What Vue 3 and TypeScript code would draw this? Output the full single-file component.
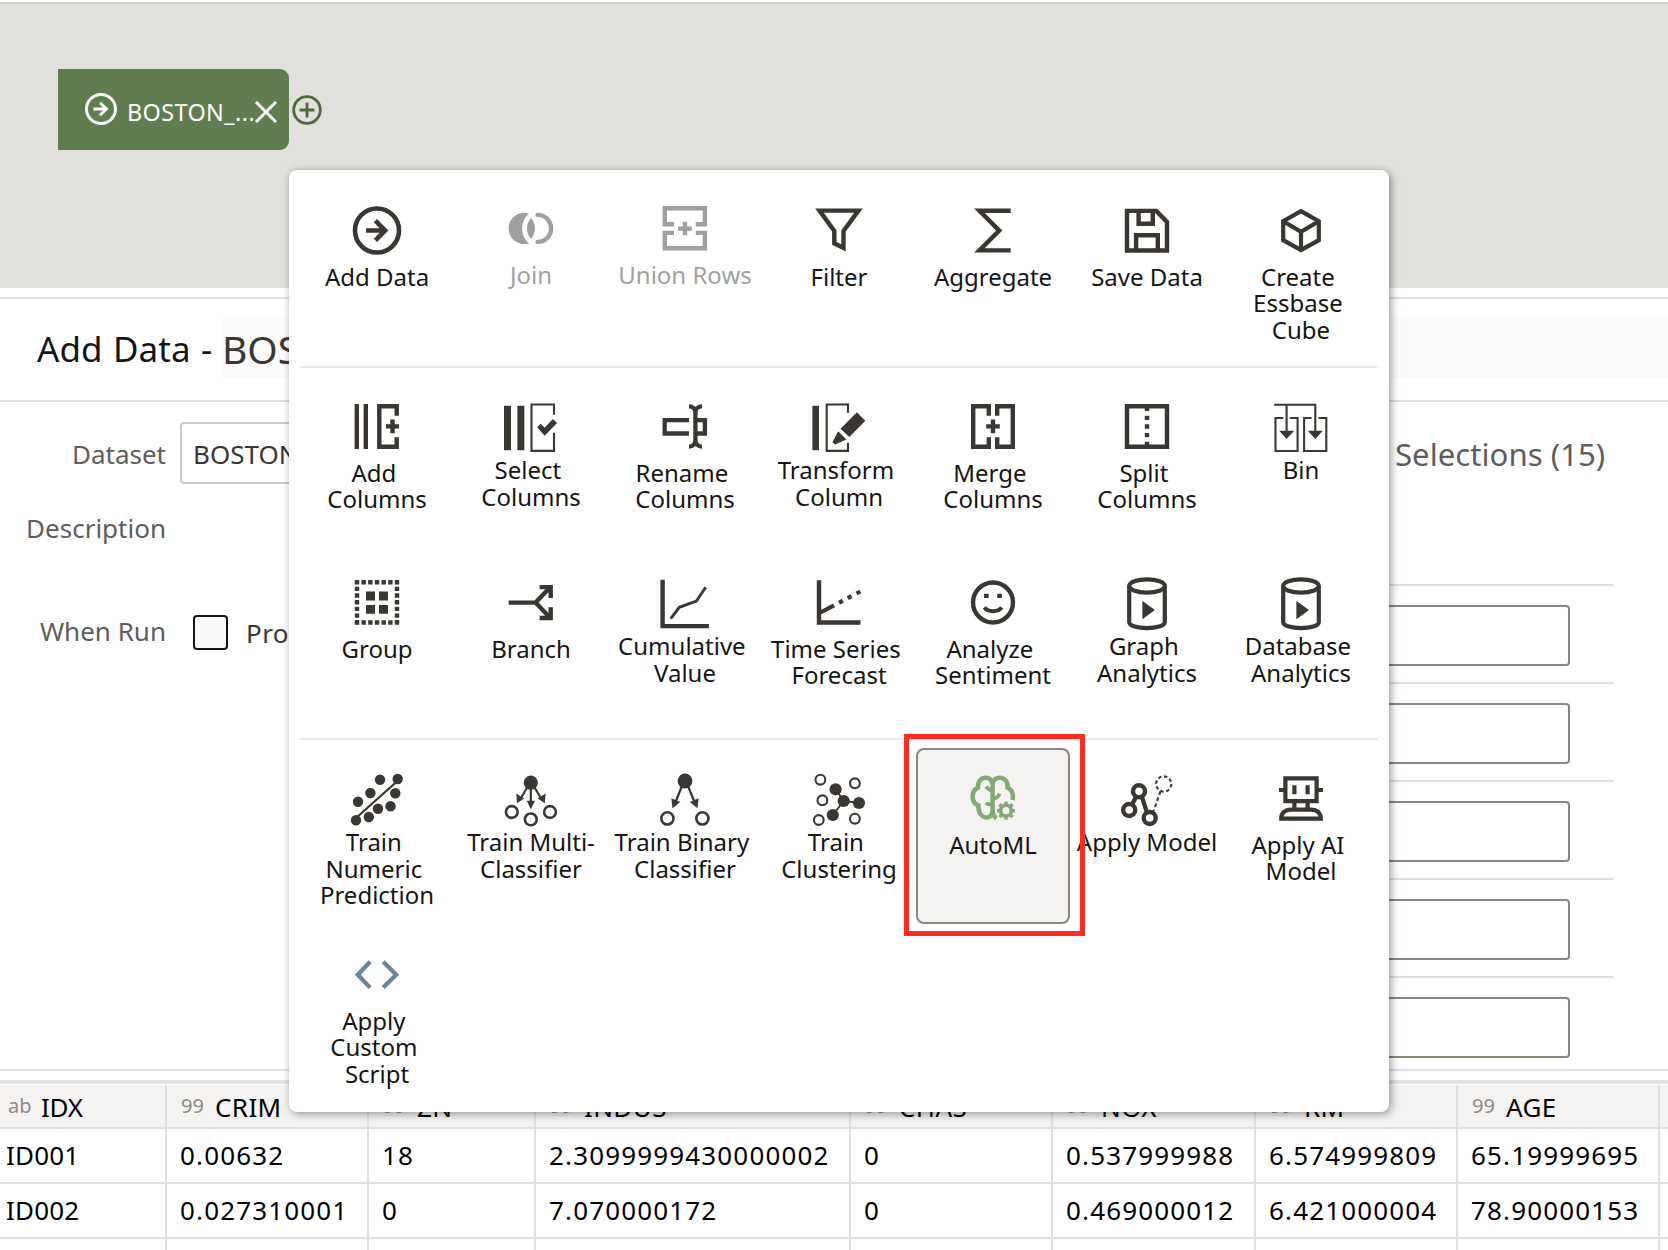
<script setup lang="ts">
interface Step {
  lines: string[]
  icon: string
  tall?: boolean
  disabled?: boolean
  selected?: boolean
  tone?: 'green' | 'blue'
}

// Every step icon is drawn around its own centre (0,0) in a 64px box.
const solid = (inner: string) => `<g fill="currentColor" stroke="none">${inner}</g>`
const dots = (r: number, pts: number[][]) =>
  pts.map(([x, y]) => `<circle cx="${x}" cy="${y}" r="${r}"/>`).join('')
const path = (d: string, width = 4.4) => `<path d="${d}" stroke-width="${width}"/>`

const cylinder =
  '<ellipse cx="0" cy="-16" rx="17.8" ry="6.6" stroke-width="4.2"/>' +
  path('M-17.8-16V20C-17.8 28.2 17.8 28.2 17.8 20V-16', 4.2) +
  solid('<path d="M-4.6-1L8 8-4.6 17.3Z"/>')

const gearTeeth = [0, 45, 90, 135, 180, 225, 270, 315]
  .map((a) => `<path d="M13 6.4V3.6" stroke-width="3.4" transform="rotate(${a} 13 12.7)"/>`)
  .join('')

const groups: Step[][] = [
  [
    {
      lines: ['Add Data'],
      icon: '<circle cx="0" cy=".5" r="22" stroke-width="4.6"/>' + path('M-11 .5H8M-1.6-9.3L8.2.5-1.6 10.3', 4.6),
    },
    {
      lines: ['Join'],
      disabled: true,
      icon:
        solid(
          '<path d="M-2.1-14.6A15.7 15.7 0 1 0-2.1 15.4A19.9 19.9 0 0 1-2.1-14.6Z"/>' +
            '<path d="M0-9.9A15.3 15.3 0 0 1 0 10.7A15.3 15.3 0 0 1 0-9.9Z"/>',
        ) + '<path d="M6.6-13.1A13.5 13.5 0 0 1 6.6 13.9" stroke-width="4.4" stroke-linecap="round"/>',
    },
    {
      lines: ['Union Rows'],
      disabled: true,
      icon: path('M-11-3.8H-20.2V-19.7H19.9V-3.8H10.7M-11 4.9H-20.2V20.3H19.9V4.9H10.7M-6.8.6H6.8M0-6.2V7.2'),
    },
    { lines: ['Filter'], icon: path('M-19.5-19.4H19.5L4.5 1V18L-4.7 13.3V1Z') },
    { lines: ['Aggregate'], icon: path('M17.7-19.2H-13.6L6.3.6-13.6 20.4H17.7') },
    {
      lines: ['Save Data'],
      icon: path('M-20-19.1H9.3L20-8V20.5H-20ZM-8.4-19V-6.2H5.8V-19M-10.9 20V5.2H10.8V20'),
    },
    {
      lines: ['Create ', 'Essbase ', 'Cube'],
      icon: path('M0-18.8L17.8-8.8V10.2L0 20.2-17.8 10.2V-8.8ZM-17.8-8.8L0 1.8 17.8-8.8M0 2V20', 4.2),
    },
  ],
  [
    {
      lines: ['Add ', 'Columns'],
      icon: path('M-20.2-22V23M-11.2-22V23M19.7-10.3V-19.8H2.3V20.8H19.7V11.3M9 .4H22M15.5-6.4V7.2'),
    },
    {
      lines: ['Select ', 'Columns'],
      tall: true,
      icon:
        solid('<path d="M-27-20.3H-20V24.3H-27ZM-13.6-20.3H-6.7V24.3H-13.6ZM6.1 1.3L9.7-2.2 13.6 1.7 21.9-7 26.1-3 13.6 9.7Z"/>') +
        path('M23-11.3V-21.5H.5V24.9H23V6.7', 2.1),
    },
    {
      lines: ['Rename ', 'Columns'],
      icon: path(
        'M4-5.8H-20.3V7.5H4M12-5.8H19.9V7.5H12M4-19.6C8-19.6 10.4-17 10.4-13V14C10.4 18 8 20.6 4 20.6M17-19.6C13-19.6 10.4-17 10.4-13M10.4 14C10.4 18 13 20.6 17 20.6',
        4.3,
      ),
    },
    {
      lines: ['Transform ', 'Column'],
      tall: true,
      icon:
        solid(
          '<path d="M-26.6-20.3H-20V24.3H-26.6ZM17.9-13.7L26.3-5.3 10.3 11 1.5 2.7ZM-.8 5.2L7.4 13.4 2.3 15.8-3.9 18.6-6.6 16.2Z"/>',
        ) + path('M9-13.3V-21.5H-12.3V24.9H9V16.7', 2.1),
    },
    {
      lines: ['Merge ', 'Columns'],
      icon: path('M-4.2-10.3V-19.8H-19.8V20.8H-4.2V11.3M4.2-10.3V-19.8H19.8V20.8H4.2V11.3M-6.8.4H6.8M0-6.4V7.2'),
    },
    {
      lines: ['Split ', 'Columns'],
      icon: path('M-20-19.8H20V20.8H-20ZM0-19V-15M0-10.3V-6M0-1.7V2.7M0 7V11.3M0 15.7V20'),
    },
    {
      lines: ['Bin'],
      tall: true,
      icon:
        path('M-26.8-21.2H14.3V5M-14.4-21V5M-17.7-8H-25.5V25H-3.4V-8H-11.2M10.6-8H3.1V25H25.3V-8H17.5', 2.1) +
        solid('<path d="M-21.8 4.7H-6.8L-14.4 13ZM6.8 4.7H21.8L14.3 13Z"/>'),
    },
    {
      lines: ['Group'],
      icon:
        '<path d="M-22.2-19.8H22.2M-22.2 20.5H22.2M-20-22V22.7M20-22V22.7" stroke-width="4.4" stroke-dasharray="4.4 2.28"/>' +
        solid('<path d="M-11-10.4H-2V-1.6H-11ZM2-10.4H11V-1.6H2ZM-11 2.9H-2V11.7H-11ZM2 2.9H11V11.7H2Z"/>'),
    },
    {
      lines: ['Branch'],
      icon: path('M-22.4.6H4.6L19-14.6M8.6-14.9H19.7V-4M4.6.6L19 15.8M8.6 16H19.7V5.2'),
    },
    {
      lines: ['Cumulative ', 'Value'],
      tall: true,
      icon: path('M-22.4-22.3V24.1H23.9') + path('M-14.3 16.7L-5.7 5.3 11.4-1 20.7-14.7', 2.9),
    },
    {
      lines: ['Time Series ', 'Forecast'],
      icon: path('M-20-21.7V20.5H21.5') + path('M-18.5 10.5L-5 3.3M0 .8L3.8-1.3M8.7-3.9L12.5-5.9M17.5-8.5L21.3-10.5', 4.2),
    },
    {
      lines: ['Analyze ', 'Sentiment'],
      icon:
        '<circle cx="0" cy=".5" r="20" stroke-width="4.4"/>' +
        path('M-8.7 5.4C-5 10.5 5 10.5 8.7 5.4', 4) +
        solid('<path d="M-8.9-8.3H-4.3V-3.9H-8.9ZM4.3-8.3H8.9V-3.9H4.3Z"/>'),
    },
    { lines: ['Graph ', 'Analytics'], tall: true, icon: cylinder },
    { lines: ['Database ', 'Analytics'], tall: true, icon: cylinder },
  ],
  [
    {
      lines: ['Train ', 'Numeric ', 'Prediction'],
      tall: true,
      icon:
        solid(
          dots(5.2, [[-21, 22.3], [-8.2, 19], [1, 10.7], [13.5, 8.3], [18.3, -4.7], [20.7, -19], [3, -18.3], [-6.6, -5], [-19, 3.7]]),
        ) + path('M-21 20L20.5-17', 2.2),
    },
    {
      lines: ['Train Multi-', 'Classifier'],
      tall: true,
      icon:
        solid(
          dots(7.1, [[-0.2, -15.3]]) +
            '<path d="M-4.2 2.7H4L-.2 11.3ZM-14.8-4.6L-6.9.6-14 5.2ZM14.6-4.6L6.7.6 13.8 5.2Z"/>',
        ) +
        path('M-.2-12V5M-3.5-11L-10 0M3.3-11L9.8 0', 2.2) +
        `<g stroke-width="2.6">${dots(5.9, [[-19.2, 14], [-0.2, 21.4], [19, 14]])}</g>`,
    },
    {
      lines: ['Train Binary ', 'Classifier'],
      tall: true,
      icon:
        solid(dots(7.4, [[0, -17]]) + '<path d="M-13.7.2L-4.8 4-12.5 10.2ZM13.7.2L4.8 4 12.5 10.2Z"/>') +
        path('M-3-12L-9.5 4M3-12L9.5 4', 2.2) +
        `<g stroke-width="2.6">${dots(6.1, [[-17.6, 20.4], [17.4, 20.4]])}</g>`,
    },
    {
      lines: ['Train ', 'Clustering'],
      tall: true,
      icon:
        solid(dots(6.1, [[-3.4, -8.7], [4.7, 3], [20, 5], [-6.2, 17]])) +
        path('M-3.4-8.7L4.7 3 20 5M4.7 3L-6.2 17', 2) +
        `<g stroke-width="2.1">${dots(4.9, [[-18.6, -18.3], [15.9, -14.7], [-16.6, 2.3], [-20.2, 22], [15.9, 20.7]])}</g>`,
    },
    {
      lines: ['AutoML'],
      selected: true,
      tone: 'green',
      icon:
        path('M-.8-14C-1-22.8-15.6-23-15-10.4C-22.6-7-21.8 5-14.6 7.4C-15.4 22-.4 23-.4 12', 4.5) +
        path('M-.4-15V12C-.4 16 .8 18.6 3.4 20.4M-.4-14C-.2-22.8 15.4-23 14.6-10.4C19.4-8 20.8-3 19.6 2', 4.5) +
        path('M-6.8-11.5C-5-8.5-3-8-.8-7.6M0 .4C3 .4 5.4-1 6.6-4.4M-7 4.8C-5.4 6.4-3 6.6-.8 6', 3.8) +
        '<circle cx="13" cy="12.7" r="5.4" stroke-width="3.6"/>' +
        gearTeeth,
    },
    {
      lines: ['Apply Model'],
      tall: true,
      icon:
        `<g stroke-width="4.4">${dots(6, [[-8, -6.7], [-17.8, 12], [2.7, 20]])}</g>` +
        path('M-10.8-1.4L-15 6.7M-5.2-1.4L0 14.6', 4.4) +
        '<circle cx="16.7" cy="-14" r="7.6" stroke-width="2.1" stroke-dasharray="3.4 2.57"/>' +
        '<path d="M13.4-6.6L6.6 13" stroke-width="2.1" stroke-dasharray="3.6 2.8"/>',
    },
    {
      lines: ['Apply AI ', 'Model'],
      icon:
        path('M-15.6-19.6H15.6V3.2H-15.6ZM-22-8H-16M16-8H22M-6.6 4V10M6.6 4V10M-6.6-12.7V-3.8M6.6-12.7V-3.8', 4.2) +
        path('M-19.8 20.7C-19.8 14-15 11.6-10 11.6H10C15 11.6 19.8 14 19.8 20.7Z', 4.2),
    },
    {
      lines: ['Apply ', 'Custom ', 'Script'],
      tone: 'blue',
      icon: path('M-6.9-12.2L-19.2.7-6.9 13.6M6.2-12.2L19.2.7 6.2 13.6', 4.2),
    },
  ],
]

const columns = [
  { name: 'IDX', type: 'ab', width: 167, cells: ['ID001', 'ID002'] },
  { name: 'CRIM', type: '99', width: 202, cells: ['0.00632', '0.027310001'] },
  { name: 'ZN', type: '99', width: 167, cells: ['18', '0'] },
  { name: 'INDUS', type: '99', width: 315, cells: ['2.3099999430000002', '7.070000172'] },
  { name: 'CHAS', type: '99', width: 202, cells: ['0', '0'] },
  { name: 'NOX', type: '99', width: 203, cells: ['0.537999988', '0.469000012'] },
  { name: 'RM', type: '99', width: 202, cells: ['6.574999809', '6.421000004'] },
  { name: 'AGE', type: '99', width: 202, cells: ['65.19999695', '78.90000153'] },
]
</script>

<template>
  <main class="page">
    <section class="canvas">
      <div class="flow">
        <div class="node">
          <svg class="node-icon" viewBox="-16 -16 32 32">
            <circle r="14.5" />
            <path d="M-7.5 0H5.4M-1-6.3L5.4 0-1 6.3" />
          </svg>
          <span class="node-name">BOSTON_...</span>
          <svg class="node-close" viewBox="0 0 22 22"><path d="M1 1L21 21M21 1L1 21" /></svg>
        </div>
        <svg class="node-add" viewBox="-15 -15 30 30">
          <circle r="13.3" />
          <path d="M-7.4 0H7.4M0-7.4V7.4" />
        </svg>
      </div>
    </section>

    <section class="editor">
      <header class="title">
        <span class="title-kind">Add Data -</span>
        <span class="title-name">BOSTON_...</span>
      </header>
      <div class="body">
        <div class="form">
          <div class="row dataset">
            <label>Dataset</label>
            <div class="input">BOSTON_...</div>
          </div>
          <div class="row description"><label>Description</label></div>
          <div class="row run">
            <label>When Run</label>
            <span class="check"></span>
            <span class="prompt">Prompt</span>
          </div>
        </div>
        <div class="selections">
          <h2>Selections (15)</h2>
          <div v-for="n in 5" :key="n" class="field"><div class="box"></div></div>
        </div>
      </div>
    </section>

    <div class="splitter"></div>

    <section class="grid">
      <div v-for="c in columns" :key="c.name" class="col" :style="{ width: c.width + 'px' }">
        <div class="head" :class="{ first: c.type === 'ab' }">
          <span class="type">{{ c.type }}</span>
          <span class="name">{{ c.name }}</span>
        </div>
        <div v-for="(v, i) in c.cells" :key="i" class="cell" :class="{ first: c.type === 'ab' }">{{ v }}</div>
      </div>
      <div class="col rest">
        <div class="head"></div>
        <div class="cell"></div>
        <div class="cell"></div>
      </div>
    </section>

    <div class="menu">
      <div v-for="(g, gi) in groups" :key="gi" class="group">
        <button
          v-for="s in g"
          :key="s.lines.join('')"
          class="step"
          :class="[{ tall: s.tall, disabled: s.disabled, selected: s.selected }, s.tone]"
        >
          <svg viewBox="-32 -32 64 64" v-html="s.icon"></svg>
          <span class="label"><span v-for="l in s.lines" :key="l" class="line">{{ l }}</span></span>
        </button>
      </div>
    </div>
    <div class="highlight"></div>
  </main>
</template>

<style>
body {
  margin: 0;
  background: #fff;
}
</style>

<style scoped>
.page {
  position: relative;
  box-sizing: border-box;
  width: 1668px;
  height: 1250px;
  padding-top: 2px;
  overflow: hidden;
  background: #fff;
  color: #161513;
  font-family: 'Noto Sans', 'Open Sans', sans-serif;
  white-space: nowrap;
}
svg {
  display: block;
  flex: none;
  fill: none;
  stroke: currentColor;
  overflow: visible;
}
.canvas {
  box-sizing: border-box;
  height: 286px;
  padding: 65px 0 0 58px;
  border-top: 2px solid #cecdca;
  border-bottom: 2px solid #dfe3e6;
  background: #e2e1de;
}
.flow {
  display: flex;
  align-items: flex-start;
}
.node {
  display: flex;
  box-sizing: border-box;
  width: 231px;
  height: 81px;
  padding-left: 27px;
  border-radius: 0 9px 9px 0;
  background: #5f7d4f;
  color: #fff;
}
.node-icon {
  width: 32px;
  height: 32px;
  margin-top: 24px;
  stroke-width: 3;
}
.node-name {
  width: 126px;
  margin: 27px 0 0 10px;
  font-size: 23.4px;
  line-height: 32px;
  letter-spacing: 0.4px;
}
.node-close {
  width: 22px;
  height: 22px;
  margin-top: 32px;
  margin-left: 2px;
  stroke-width: 3;
}
.node-add {
  width: 30px;
  height: 30px;
  margin: 25.5px 0 0 2.5px;
  color: #4d6a3c;
  stroke-width: 2.8;
}
.editor {
  display: flex;
  flex-direction: column;
  box-sizing: border-box;
  height: 774px;
  margin-top: 9px;
  border-top: 2px solid #dde2e7;
  border-bottom: 2px solid #dde1e5;
}
.title {
  display: flex;
  flex: none;
  height: 101px;
  border-bottom: 2px solid #dfdedb;
}
.title-kind {
  width: 185px;
  padding-left: 37px;
  margin-top: 26px;
  font-size: 35px;
  line-height: 48px;
  letter-spacing: 0.1px;
  word-spacing: 1px;
}
.title-name {
  flex: 1;
  height: 61px;
  margin-top: 18px;
  border-radius: 4px 0 0 4px;
  background: #fbfbfb;
  color: #3a3631;
  font-size: 39px;
  line-height: 63px;
}
.body {
  display: flex;
  flex: 1;
  justify-content: space-between;
  min-height: 0;
}
.form {
  display: flex;
  flex-direction: column;
  width: 700px;
  padding-top: 20px;
  color: #3a3631;
  font-size: 26px;
}
.row {
  display: flex;
  align-items: center;
  height: 62px;
}
.row label {
  width: 166px;
  margin-top: 2px;
  color: #5f5d5b;
  text-align: right;
}
.row.description {
  margin-top: 12px;
}
.row.run {
  margin-top: 41px;
}
.input {
  box-sizing: border-box;
  width: 500px;
  height: 62px;
  margin-left: 14px;
  padding-left: 11px;
  border: 2px solid #cfcac5;
  border-radius: 4px;
  line-height: 60px;
}
.check {
  box-sizing: border-box;
  width: 35px;
  height: 35px;
  margin: 5px 0 0 27px;
  border: 2px solid #161513;
  border-radius: 4px;
  background: #fafafa;
}
.prompt {
  margin: 5px 0 0 18px;
  letter-spacing: 0.4px;
}
.selections {
  width: 320px;
  margin-right: 54px;
}
.selections h2 {
  height: 182px;
  margin: 0 0 0 101px;
  color: #5f5d5b;
  font-size: 31.2px;
  font-weight: 400;
  line-height: 104px;
}
.field {
  box-sizing: border-box;
  height: 98px;
  padding: 18.5px 44px 0 0;
  border-top: 2px solid #e0e0e0;
}
.box {
  box-sizing: border-box;
  height: 61px;
  border: 2px solid #8b8580;
  border-radius: 4px;
}
.splitter {
  height: 4px;
  margin: 9px 0 1px;
  background: #dfe3e6;
}
.grid {
  display: flex;
  color: #000;
  font-size: 26px;
}
.col {
  flex: none;
  box-sizing: border-box;
  height: 180px;
  border-right: 2px solid #dedfdf;
}
.col.rest {
  width: 20px;
}
.head {
  display: flex;
  height: 42px;
  padding-left: 14px;
  border-bottom: 2px solid #dedfdf;
  background: #f4f3f2;
  line-height: 45px;
}
.head.first {
  padding-left: 8px;
}
.type {
  width: 34px;
  color: #8e8a86;
  font-size: 20px;
  line-height: 42px;
}
.first .type {
  width: 33px;
}
.name {
  letter-spacing: 0.4px;
}
.first .name {
  letter-spacing: -0.3px;
}
.cell {
  height: 53px;
  padding-left: 13px;
  border-bottom: 2px solid #dedfdf;
  line-height: 52px;
  letter-spacing: 1.15px;
}
.cell.first {
  padding-left: 6px;
  letter-spacing: 0.2px;
}
.menu {
  position: absolute;
  top: 170px;
  left: 289px;
  box-sizing: border-box;
  width: 1100px;
  height: 942px;
  padding: 10px 11px 0;
  border-radius: 8px;
  background: #fff;
  box-shadow: 2px 2px 8px rgba(0, 0, 0, 0.4);
}
.group {
  display: flex;
  flex-wrap: wrap;
}
.group + .group {
  margin-top: 10px;
  padding-top: 8px;
  border-top: 2px solid #e8e8e8;
}
.step {
  display: flex;
  flex-direction: column;
  align-items: center;
  box-sizing: border-box;
  width: 154px;
  height: 176px;
  padding: 16px 0 0;
  border: 2px solid transparent;
  border-radius: 8px;
  background: none;
  color: #3a3631;
  font: inherit;
}
.step svg {
  width: 64px;
  height: 64px;
}
.step.selected {
  border-color: #8b8580;
  background: #f4f3f1;
}
.label {
  display: flex;
  flex-direction: column;
  align-items: center;
  margin-top: 1.5px;
  color: #161513;
  font-size: 24px;
  line-height: 26.5px;
  white-space: pre;
}
.tall .label {
  margin-top: -1px;
}
.disabled {
  padding-top: 14px;
  color: #a0a0a0;
}
.disabled .label {
  color: #a0a0a0;
}
.green {
  color: #84a876;
}
.blue {
  color: #6b8399;
}
.highlight {
  position: absolute;
  top: 734px;
  left: 904px;
  box-sizing: border-box;
  width: 181px;
  height: 202px;
  border: 5px solid #ff2b1f;
}
</style>
